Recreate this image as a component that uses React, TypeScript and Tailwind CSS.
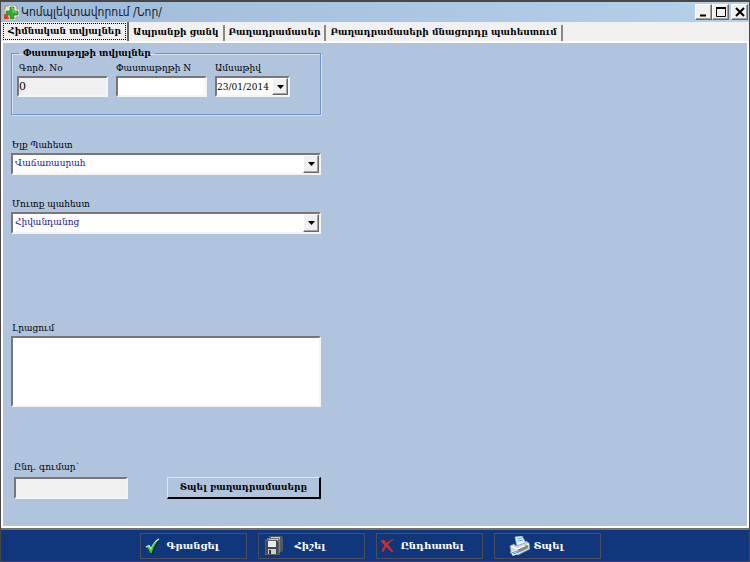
import { useState } from "react";
import type { ReactNode } from "react";

const tabs = ["Հիմնական տվյալներ", "Ապրանքի ցանկ", "Բաղադրամասեր", "Բաղադրամասերի մնացորդը պահեստում"];

const sunken = "border-2 border-t-[#7b7675] border-l-[#7b7675] border-r-[#f4f4f2] border-b-[#f4f4f2] outline-0 rounded-none";
const raised = "border border-t-white border-l-white border-r-[#6b6765] border-b-[#6b6765] bg-[#f0f0f0] shadow-[inset_-1px_-1px_0_#a5a29f]";

function Arrow() {
  return (
    <span className={`pointer-events-none absolute top-0.5 right-0.5 bottom-0.5 flex w-4 items-center justify-center ${raised}`}>
      <svg className="h-1 w-[7px]" viewBox="0 0 7 4"><path d="M0 0h7L3.5 4z" fill="#000" /></svg>
    </span>
  );
}

function WindowButton({ label, children }: { label: string; children: ReactNode }) {
  return (
    <button aria-label={label} className={`flex h-4 w-[17px] items-center justify-center ${raised}`}>
      <svg className="h-3 w-3" viewBox="0 0 12 12" fill="none" stroke="#000">{children}</svg>
    </button>
  );
}

function Combo({ id, label, value, options }: { id: string; label: string; value: string; options: string[] }) {
  return (
    <div className="w-[310px]">
      <label htmlFor={id} className="block h-[18px] pl-px leading-5">{label}</label>
      <div className="relative">
        <select id={id} defaultValue={value} className={`block h-[22px] w-full appearance-none bg-white pr-5 pl-0.5 text-[#1a1296] ${sunken}`}>
          {options.map((o) => <option key={o}>{o}</option>)}
        </select>
        <Arrow />
      </div>
    </div>
  );
}

function AppIcon() {
  return (
    <svg className="h-[15px] w-[15px]" viewBox="0 0 15 15">
      <path d="M1 1h12v12H1z" fill="#efe3bd" stroke="#a98f62" />
      <path d="M6 2h4v4h4v4h-4v4H6v-4H2V6h4z" fill="#2f9e2b" stroke="#fff" strokeWidth="2.4" />
      <path d="M6 2h4v4h4v4h-4v4H6v-4H2V6h4z" fill="#35ab2e" stroke="#237f22" strokeWidth=".8" />
      <path d="M7 3h2v4h4" fill="none" stroke="#8bdc74" />
      <path d="M0 9l4 1 1 4H0z" fill="#d8402c" />
    </svg>
  );
}

function CheckIcon() {
  return (
    <svg className="h-4 w-4" viewBox="0 0 16 16">
      <path d="M2 10l3-1 2 3C8 7 11 4 15 2 11 7 9 10 8 16H6C5 13 4 11 2 10z" fill="#04122f" />
      <path d="M1 9l3-1.5L6 11C8 6 10 3 14 1 11 5 9 9 7 15H5C4 12 3 10 1 9z" fill="#1da51f" />
      <path d="M1 9l3-1.5L6 11C8 6 10 3 14 1" stroke="#e3f9dc" strokeWidth="1.2" fill="none" />
      <path d="M3 9c1 1 2 3 3 5 1-4 3-8 5-10" stroke="#3fd02f" strokeWidth="1.2" fill="none" />
    </svg>
  );
}

function DisksIcon() {
  return (
    <svg className="h-[19px] w-[18px]" viewBox="0 0 18 19">
      <path d="M4 0h13l1 2v13l-2 1H4z" fill="#56595d" />
      <path d="M6 1h9v7H6z" fill="#c9cccf" />
      <path d="M2 2h12l1 2v13H2z" fill="#777a7e" />
      <path d="M4 3h9v6H4z" fill="#d9dadc" />
      <path d="M0 4h12l2 2v13H0z" fill="#45484c" stroke="#8d9093" strokeWidth=".6" />
      <path d="M3 5h8v6H3z" fill="#f3f3f3" />
      <path d="M3 7h8M3 9h8" stroke="#cfd1d3" strokeWidth=".6" />
      <path d="M3 13h8v5H3z" fill="#cfd1d3" />
      <path d="M4 14h2v4H4z" fill="#303236" />
    </svg>
  );
}

function CrossIcon() {
  return (
    <svg className="h-[14px] w-[14px]" viewBox="0 0 14 14">
      <path d="M0 2l3-1c2 3 6 7 9 12l-2-1C7 9 3 6 0 2z" fill="#d0302a" stroke="#d0302a" strokeWidth=".8" />
      <path d="M13 0C8 3 4 8 2 13l-1-1C3 6 7 2 13 0z" fill="#d5352c" stroke="#c02c2c" strokeWidth=".8" />
    </svg>
  );
}

function PrinterIcon() {
  return (
    <svg className="h-5 w-[21px]" viewBox="0 0 21 20">
      <path d="M6 1l7-1 4 7-9 3z" fill="#e5f2fb" stroke="#8cb6da" strokeWidth=".7" />
      <path d="M8 3l5-1M9 5l5-1" stroke="#65a5d8" />
      <path d="M1 10l4-2 2 2 9-3 1-2 3 2 1 6-12 6-7-3z" fill="#d3d8dd" stroke="#8b949d" strokeWidth=".6" />
      <path d="M2 10l6 3 12-5" fill="none" stroke="#fff" strokeWidth="1.3" />
      <path d="M8 14l11-5v3L9 17z" fill="#7d8691" />
      <path d="M1 16l7-2 3 3-7 3z" fill="#eef6fb" />
      <path d="M2 17l7-2M4 18l6-2" stroke="#4697d6" />
      <path d="M16 10l2-1" stroke="#62ce4b" strokeWidth="1.4" />
    </svg>
  );
}

const actions = [
  { label: "Գրանցել", icon: <CheckIcon />, cls: "pl-1 gap-1.5" },
  { label: "Հիշել", icon: <DisksIcon />, cls: "pl-1.5 gap-3" },
  { label: "Ընդհատել", icon: <CrossIcon />, cls: "pl-1 gap-1.5" },
  { label: "Տպել", icon: <PrinterIcon />, cls: "pl-3.5 gap-1" },
];

export default function App() {
  const [active, setActive] = useState(0);

  return (
    <div className="flex min-h-screen w-full flex-col border border-t-2 border-[#4b4746] bg-[#10377c] font-['DejaVu_Serif',serif] text-[9px] text-black">
      <header className="flex h-5 items-center bg-linear-to-r from-[#9ebbd9] to-[#b5d0eb] pr-px pl-[3px]">
        <AppIcon />
        <h1 className="ml-0.5 flex-1 font-['DejaVu_Sans_Condensed','DejaVu_Sans',sans-serif] text-[12px] text-[#16202c]">Կոմպլեկտավորում /Նոր/</h1>
        <WindowButton label="Minimize"><path d="M2 9.5h6" strokeWidth="2" /></WindowButton>
        <WindowButton label="Maximize"><path d="M1.5 1.5h9v9h-9z" /><path d="M1 2h10" strokeWidth="2" /></WindowButton>
        <span className="w-0.5" />
        <WindowButton label="Close"><path d="M2 2l8 8M10 2l-8 8" strokeWidth="2" /></WindowButton>
      </header>

      <nav role="tablist" className="flex h-[21px] items-end border-b-2 border-white bg-[#f0f0f0] font-bold">
        {tabs.map((t, i) => (
          <button
            key={t}
            role="tab"
            aria-selected={i === active}
            onClick={() => setActive(i)}
            className={i === active
              ? "h-[19px] border-r-2 border-[#6b6765] p-px pl-0.5"
              : "h-4 border-r-2 border-[#8b8785] px-1 whitespace-nowrap"}
          >
            {i === active
              ? <span className="flex h-full items-center border border-dotted border-black px-1 whitespace-nowrap">{t}</span>
              : t}
          </button>
        ))}
      </nav>

      <main className="flex-1 border-r-2 border-b-2 border-l-2 border-white bg-[#b0c4de] pt-1 pl-2">
        <fieldset className="h-[68px] w-[310px] border border-[#6f93c8] pt-[3px] pl-[5px] shadow-[inset_1px_1px_0_#d5e1f1,1px_1px_0_#d5e1f1]">
          <legend className="ml-0.5 px-1 leading-3 font-bold">Փաստաթղթի տվյալներ</legend>
          <div className="flex gap-2">
            <div className="w-[91px]">
              <label htmlFor="num" className="block h-3.5 pl-0.5 leading-3">Գործ. No</label>
              <input id="num" readOnly defaultValue="0" className={`block h-[21px] w-full bg-[#f0f0f0] text-[11px] ${sunken}`} />
            </div>
            <div className="w-[91px]">
              <label htmlFor="doc" className="block h-3.5 leading-3 whitespace-nowrap">Փաստաթղթի N</label>
              <input id="doc" className={`block h-[21px] w-full bg-white ${sunken}`} />
            </div>
            <div className="w-[75px]">
              <label htmlFor="date" className="block h-3.5 leading-3">Ամսաթիվ</label>
              <div className="relative">
                <input id="date" defaultValue="23/01/2014" className={`block h-[21px] w-full bg-white pr-4 ${sunken}`} />
                <Arrow />
              </div>
            </div>
          </div>
        </fieldset>

        <div className="mt-5 flex flex-col gap-[19px]">
          <Combo id="from" label="Ելք Պահեստ" value="Վաճառասրահ" options={["Վաճառասրահ", "Հիվանդանոց"]} />
          <Combo id="to" label="Մուտք պահեստ" value="Հիվանդանոց" options={["Վաճառասրահ", "Հիվանդանոց"]} />
        </div>

        <div className="mt-[86px] w-[310px]">
          <label htmlFor="note" className="block h-4 pl-px leading-4">Լրացում</label>
          <textarea id="note" className={`block h-[71px] w-full resize-none bg-white ${sunken}`} />
        </div>

        <div className="mt-[52px] flex w-[310px] items-end justify-between pl-[3px]">
          <div className="w-[114px]">
            <label htmlFor="sum" className="block h-[18px] leading-4">Ընդ. գումար՝</label>
            <input id="sum" readOnly className={`block h-[22px] w-full bg-[#f0f0f0] ${sunken}`} />
          </div>
          <button className="h-[22px] w-[154px] border border-t-[#dce7f5] border-r-2 border-b-2 border-l-[#dce7f5] border-r-black border-b-black font-bold whitespace-nowrap">
            Տպել բաղադրամասերը
          </button>
        </div>
      </main>

      <footer className="flex h-[33px] items-center justify-center gap-[11px] border-t-2 border-[#77716c] pr-2.5">
        {actions.map((a) => (
          <button key={a.label} className={`flex h-[26px] w-[107px] items-center border border-[#4b4f5c] text-[10px] font-bold text-white ${a.cls}`}>
            {a.icon}
            {a.label}
          </button>
        ))}
      </footer>
    </div>
  );
}
